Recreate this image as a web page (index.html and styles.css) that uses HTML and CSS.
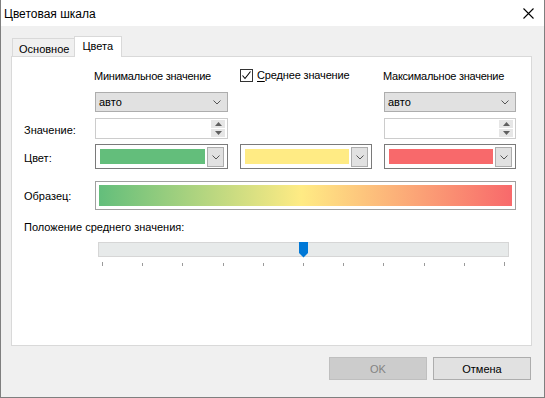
FILE: index.html
```html
<!DOCTYPE html>
<html lang="ru">
<head>
<meta charset="utf-8">
<title>Цветовая шкала</title>
<link rel="stylesheet" href="styles.css">
</head>
<body>
<div class="window">
  <div class="titlebar">
    <span class="title">Цветовая шкала</span>
    <svg class="close" width="11" height="11" viewBox="0 0 11 11"><path d="M0.5 0.5 L10.5 10.5 M10.5 0.5 L0.5 10.5" stroke="#000" stroke-width="1.1" fill="none"/></svg>
  </div>
  <div class="main">
    <div class="tabs">
      <div class="tab">Основное</div>
      <div class="tab active">Цвета</div>
    </div>
    <div class="panel">
      <div class="grid">
        <div></div>
        <div class="head">Минимальное значение</div>
        <div class="head check-head">
          <span class="checkbox"><svg width="11" height="11" viewBox="0 0 11 11"><path d="M1.5 5.5 L4 8.5 L9.5 1.5" stroke="#000" stroke-width="1.1" fill="none"/></svg></span>
          <span><u>С</u>реднее значение</span>
        </div>
        <div class="head">Максимальное значение</div>

        <div></div>
        <div class="select w133"><span>авто</span><svg class="chev" width="8" height="5" viewBox="0 0 8 5"><path d="M0.5 0.5 L4 4 L7.5 0.5" stroke="#555" fill="none"/></svg></div>
        <div></div>
        <div class="select w132"><span>авто</span><svg class="chev" width="8" height="5" viewBox="0 0 8 5"><path d="M0.5 0.5 L4 4 L7.5 0.5" stroke="#555" fill="none"/></svg></div>

        <div class="label h21">Значение:</div>
        <div class="spin w133">
          <div class="spinbtns">
            <div class="sb"><svg width="7" height="4" viewBox="0 0 7 4"><path d="M0 4 L3.5 0 L7 4 Z" fill="#606060"/></svg></div>
            <div class="sb"><svg width="7" height="4" viewBox="0 0 7 4"><path d="M0 0 L3.5 4 L7 0 Z" fill="#606060"/></svg></div>
          </div>
        </div>
        <div></div>
        <div class="spin w132">
          <div class="spinbtns">
            <div class="sb"><svg width="7" height="4" viewBox="0 0 7 4"><path d="M0 4 L3.5 0 L7 4 Z" fill="#606060"/></svg></div>
            <div class="sb"><svg width="7" height="4" viewBox="0 0 7 4"><path d="M0 0 L3.5 4 L7 0 Z" fill="#606060"/></svg></div>
          </div>
        </div>

        <div class="label h25">Цвет:</div>
        <div class="colorbox w133"><div class="swatch green"></div><div class="cbtn"><svg width="8" height="5" viewBox="0 0 8 5"><path d="M0.5 0.5 L4 4 L7.5 0.5" stroke="#555" fill="none"/></svg></div></div>
        <div class="colorbox w132"><div class="swatch yellow"></div><div class="cbtn"><svg width="8" height="5" viewBox="0 0 8 5"><path d="M0.5 0.5 L4 4 L7.5 0.5" stroke="#555" fill="none"/></svg></div></div>
        <div class="colorbox w132"><div class="swatch red"></div><div class="cbtn"><svg width="8" height="5" viewBox="0 0 8 5"><path d="M0.5 0.5 L4 4 L7.5 0.5" stroke="#555" fill="none"/></svg></div></div>
      </div>

      <div class="sample-row">
        <div class="label">Образец:</div>
        <div class="sample"><div class="gradient"></div></div>
      </div>

      <div class="pos-label">Положение среднего значения:</div>
      <div class="slider">
        <div class="track">
          <svg class="thumb" width="9" height="16" viewBox="0 0 9 16"><path d="M0 0 H9 V11 L4.5 15.5 L0 11 Z" fill="#0078d7"/></svg>
        </div>
        <div class="ticks">
          <span class="tick long"></span><span class="tick"></span><span class="tick"></span><span class="tick"></span><span class="tick"></span><span class="tick"></span><span class="tick"></span><span class="tick"></span><span class="tick"></span><span class="tick"></span><span class="tick long"></span>
        </div>
      </div>
    </div>
    <div class="buttons">
      <div class="btn disabled">OK</div>
      <div class="btn">Отмена</div>
    </div>
  </div>
</div>
</body>
</html>
```

FILE: styles.css
```css
* { box-sizing: border-box; }
html, body { margin: 0; padding: 0; }
body {
  font-family: "Liberation Sans", Arial, sans-serif;
  font-size: 11px;
  color: #000;
  background: #f0f0f0;
}
.window {
  width: 545px;
  height: 398px;
  border: 1px solid #7f7f7f;
  border-top: none;
  background: #f0f0f0;
  display: flex;
  flex-direction: column;
}
.titlebar {
  height: 26px;
  background: #fff;
  display: flex;
  align-items: center;
  justify-content: space-between;
  padding-left: 3px;
  padding-right: 10px;
}
.title {
  font-size: 12px;
  padding-top: 1px;
}
.close { display: block; margin-top: 0; }

.main {
  padding: 10px 12px 0 10px;
  display: flex;
  flex-direction: column;
}
.tabs {
  display: flex;
  align-items: flex-end;
  height: 20px;
  margin-left: 1px;
  position: relative;
  z-index: 1;
}
.tab {
  height: 18px;
  padding: 0 5px 0 6px;
  border: 1px solid #d9d9d9;
  border-bottom: none;
  background: #f0f0f0;
  display: flex;
  align-items: center;
  padding-top: 2px;
}
.tab.active {
  height: 21px;
  margin-bottom: -1px;
  background: #fff;
  padding: 0 8px 2px 7px;
  border-left: 1px solid #d9d9d9;
  margin-left: -1px;
}
.panel {
  width: 521px;
  height: 290px;
  border: 1px solid #d9d9d9;
  background: #fff;
  padding: 10px 0 0 12px;
}
.grid {
  display: grid;
  grid-template-columns: 71px 145px 144px 132px;
  grid-template-rows: 25px 26px 26px 25px;
  align-items: start;
}
.w133 { width: 133px; }
.w132 { width: 132px; }
.head {
  line-height: 16px;
  padding-top: 1px;
  white-space: nowrap;
  letter-spacing: -0.25px;
  margin-left: -1px;
}
.check-head {
  display: flex;
  align-items: center;
  gap: 4px;
  padding-top: 0;
  margin-left: 0;
  letter-spacing: -0.15px;
}
.checkbox {
  width: 13px;
  height: 13px;
  border: 1px solid #333;
  background: #fff;
  display: flex;
  align-items: center;
  justify-content: center;
}
.checkbox svg { display: block; }
.check-head u { text-decoration: underline; text-underline-offset: 2px; }

.select {
  height: 20px;
  border: 1px solid #adadad;
  background: #e1e1e1;
  display: flex;
  align-items: center;
  justify-content: space-between;
  padding: 0 6px 0 3px;
}
.chev { display: block; }

.label {
  display: flex;
  align-items: center;
  white-space: nowrap;
}
.h21 { height: 21px; padding-top: 2px; }
.h25 { height: 25px; padding-top: 2px; }

.spin {
  height: 21px;
  border: 1px solid #cccccc;
  background: #fff;
  display: flex;
  justify-content: flex-end;
  padding: 1px 2px;
}
.spinbtns {
  width: 14px;
  display: flex;
  flex-direction: column;
  gap: 1px;
}
.sb {
  flex: 1;
  background: #e6e6e6;
  display: flex;
  align-items: center;
  justify-content: center;
}
.sb svg { display: block; }

.colorbox {
  height: 25px;
  border: 1px solid #7a7a7a;
  background: #fff;
  display: flex;
  align-items: center;
  padding: 0 3px 0 4px;
}
.swatch {
  flex: 1;
  height: 15px;
  margin-right: 2px;
}
.green { background: #63be7b; }
.yellow { background: #ffeb84; }
.red { background: #f8696b; }
.cbtn {
  width: 17px;
  height: 20px;
  border: 1px solid #adadad;
  background: #e1e1e1;
  display: flex;
  align-items: center;
  justify-content: center;
  margin-top: 1px;
}
.cbtn svg { display: block; }

.sample-row {
  margin-top: 12px;
  display: grid;
  grid-template-columns: 71px 421px;
  height: 29px;
}
.sample {
  border: 1px solid #a0a0a0;
  padding: 3px;
  background: #fff;
}
.gradient {
  height: 100%;
  background: linear-gradient(to right, #63be7b 0%, #ffeb84 49%, #f8696b 100%);
}
.pos-label {
  margin-top: 9px;
  line-height: 16px;
}
.slider {
  margin-top: 7px;
  margin-left: 74px;
  width: 411px;
}
.track {
  height: 15px;
  background: #e7eaea;
  border: 1px solid #d6d6d6;
  position: relative;
}
.thumb {
  position: absolute;
  left: 200px;
  top: -1px;
  display: block;
}
.ticks {
  margin-top: 5px;
  display: flex;
  justify-content: space-between;
  align-items: flex-start;
  padding: 0 4px 0 4px;
}
.tick {
  width: 1px;
  height: 3px;
  margin-top: 1px;
  background: #9a9a9a;
}
.tick.long { height: 4px; margin-top: 0; }

.buttons {
  margin-top: 11px;
  display: flex;
  justify-content: flex-end;
  gap: 6px;
  padding-right: 1px;
}
.btn {
  width: 98px;
  height: 23px;
  border: 1px solid #adadad;
  background: #e1e1e1;
  display: flex;
  align-items: center;
  justify-content: center;
}
.btn.disabled {
  background: #cccccc;
  border-color: #bfbfbf;
  color: #838383;
}
```
